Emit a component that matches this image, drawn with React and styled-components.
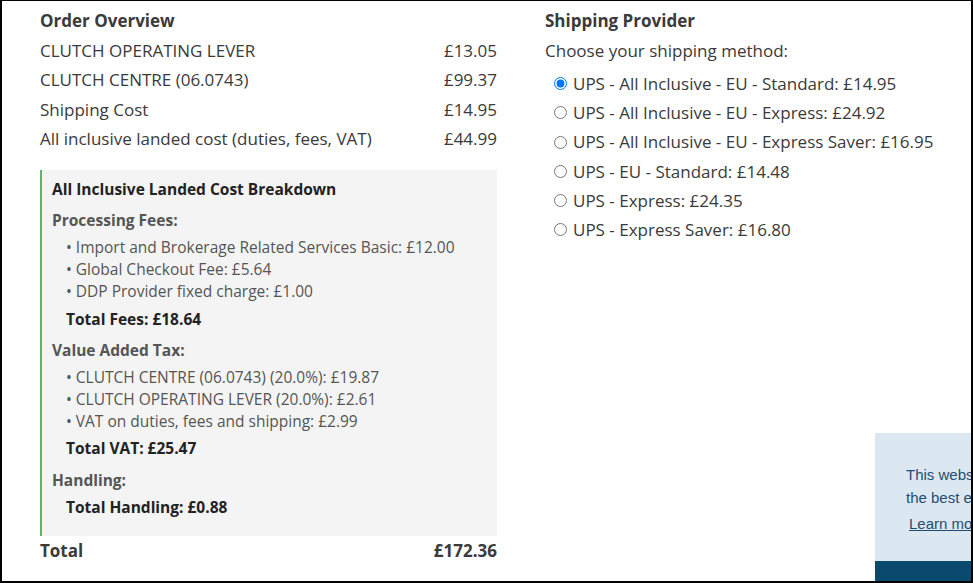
import React from 'react';
import styled, { createGlobalStyle } from 'styled-components';

const GlobalStyle = createGlobalStyle`
  html, body {
    margin: 0;
    padding: 0;
    background: #fff;
  }
  body {
    font-family: 'Open Sans', 'Noto Sans', sans-serif;
    color: #3a3a3a;
  }
`;

const Frame = styled.div`
  position: relative;
  box-sizing: border-box;
  width: 973px;
  height: 583px;
  overflow: hidden;
  border-style: solid;
  border-color: #000;
  border-width: 1px 2px 2px 2px;
`;

const Page = styled.div`
  display: grid;
  grid-template-columns: 457px 1fr;
  column-gap: 48px;
  padding: 5px 0 0 38px;
`;

const Column = styled.div`
  display: flex;
  flex-direction: column;
`;

const Heading = styled.h2`
  margin: 0;
  font-size: 17px;
  font-weight: 700;
  line-height: 29.5px;
  color: #3a3a3a;
`;

const Row = styled.div`
  display: flex;
  justify-content: space-between;
  font-size: 17px;
  line-height: 29.5px;
  font-weight: ${(p) => (p.$bold ? 700 : 400)};
`;

const Breakdown = styled.div`
  margin-top: 16px;
  background: #f4f4f4;
  border-left: 2px solid #5cb85c;
  padding: 8px 10px 18px 10px;
  font-size: 15.5px;
  line-height: 22px;
`;

const BoxTitle = styled.div`
  font-weight: 700;
  color: #222;
`;

const SectionTitle = styled.div`
  margin-top: ${(p) => p.$gap ?? 9}px;
  font-weight: 700;
  color: #555;
`;

const ItemList = styled.ul`
  list-style: none;
  margin: 5px 0 0 0;
  padding: 0 0 0 14px;
  color: #555;
  li {
    height: 22px;
  }
  li::before {
    content: '•';
    margin-right: 4px;
  }
`;

const SectionTotal = styled.div`
  margin-top: ${(p) => p.$gap}px;
  padding-left: 14px;
  font-weight: 700;
  color: #222;
`;

const Prompt = styled.div`
  font-size: 17px;
  line-height: 29.5px;
`;

const RadioList = styled.div`
  display: flex;
  flex-direction: column;
  margin-top: 4px;
  padding-left: 8px;
`;

const RadioLabel = styled.label`
  display: flex;
  align-items: center;
  font-size: 17px;
  line-height: 29.2px;
  input {
    margin: 0 6px 0 1px;
    width: 13px;
    height: 13px;
  }
`;

const Cookie = styled.div`
  position: absolute;
  right: 0;
  bottom: 0;
  width: 96px;
  height: 148px;
  display: flex;
  flex-direction: column;
  background: #dce8f1;
  font-family: 'Liberation Sans', Arial, sans-serif;
  color: #1e4d73;
  font-size: 15px;
`;

const CookieText = styled.div`
  flex: 1;
  padding: 30px 0 0 31px;
  white-space: nowrap;
  line-height: 23px;
  a {
    display: inline-block;
    margin: 3px 0 0 3px;
    color: #1e4d73;
    text-decoration: underline;
  }
`;

const CookieBar = styled.div`
  height: 20px;
  background: #0b4a6f;
`;

const overview = [
  ['CLUTCH OPERATING LEVER', '£13.05'],
  ['CLUTCH CENTRE (06.0743)', '£99.37'],
  ['Shipping Cost', '£14.95'],
  ['All inclusive landed cost (duties, fees, VAT)', '£44.99'],
];

const methods = [
  'UPS - All Inclusive - EU - Standard: £14.95',
  'UPS - All Inclusive - EU - Express: £24.92',
  'UPS - All Inclusive - EU - Express Saver: £16.95',
  'UPS - EU - Standard: £14.48',
  'UPS - Express: £24.35',
  'UPS - Express Saver: £16.80',
];

const App = () => (
  <>
    <GlobalStyle />
    <Frame>
      <Page>
        <Column>
          <Heading>Order Overview</Heading>
          {overview.map(([label, price]) => (
            <Row key={label}>
              <span>{label}</span>
              <span>{price}</span>
            </Row>
          ))}
          <Breakdown>
            <BoxTitle>All Inclusive Landed Cost Breakdown</BoxTitle>
            <SectionTitle>Processing Fees:</SectionTitle>
            <ItemList>
              <li>Import and Brokerage Related Services Basic: £12.00</li>
              <li>Global Checkout Fee: £5.64</li>
              <li>DDP Provider fixed charge: £1.00</li>
            </ItemList>
            <SectionTotal $gap={6}>Total Fees: £18.64</SectionTotal>
            <SectionTitle>Value Added Tax:</SectionTitle>
            <ItemList>
              <li>CLUTCH CENTRE (06.0743) (20.0%): £19.87</li>
              <li>CLUTCH OPERATING LEVER (20.0%): £2.61</li>
              <li>VAT on duties, fees and shipping: £2.99</li>
            </ItemList>
            <SectionTotal $gap={5}>Total VAT: £25.47</SectionTotal>
            <SectionTitle $gap={10}>Handling:</SectionTitle>
            <SectionTotal $gap={5}>Total Handling: £0.88</SectionTotal>
          </Breakdown>
          <Row $bold>
            <span>Total</span>
            <span>£172.36</span>
          </Row>
        </Column>
        <Column>
          <Heading>Shipping Provider</Heading>
          <Prompt>Choose your shipping method:</Prompt>
          <RadioList>
            {methods.map((m, i) => (
              <RadioLabel key={m}>
                <input type="radio" name="shipping" defaultChecked={i === 0} />
                {m}
              </RadioLabel>
            ))}
          </RadioList>
        </Column>
      </Page>
      <Cookie>
        <CookieText>
          This website uses cookies to ensure you get
          <br />
          the best experience on our website.
          <br />
          <a href="#cookies">Learn more</a>
        </CookieText>
        <CookieBar />
      </Cookie>
    </Frame>
  </>
);

export default App;
